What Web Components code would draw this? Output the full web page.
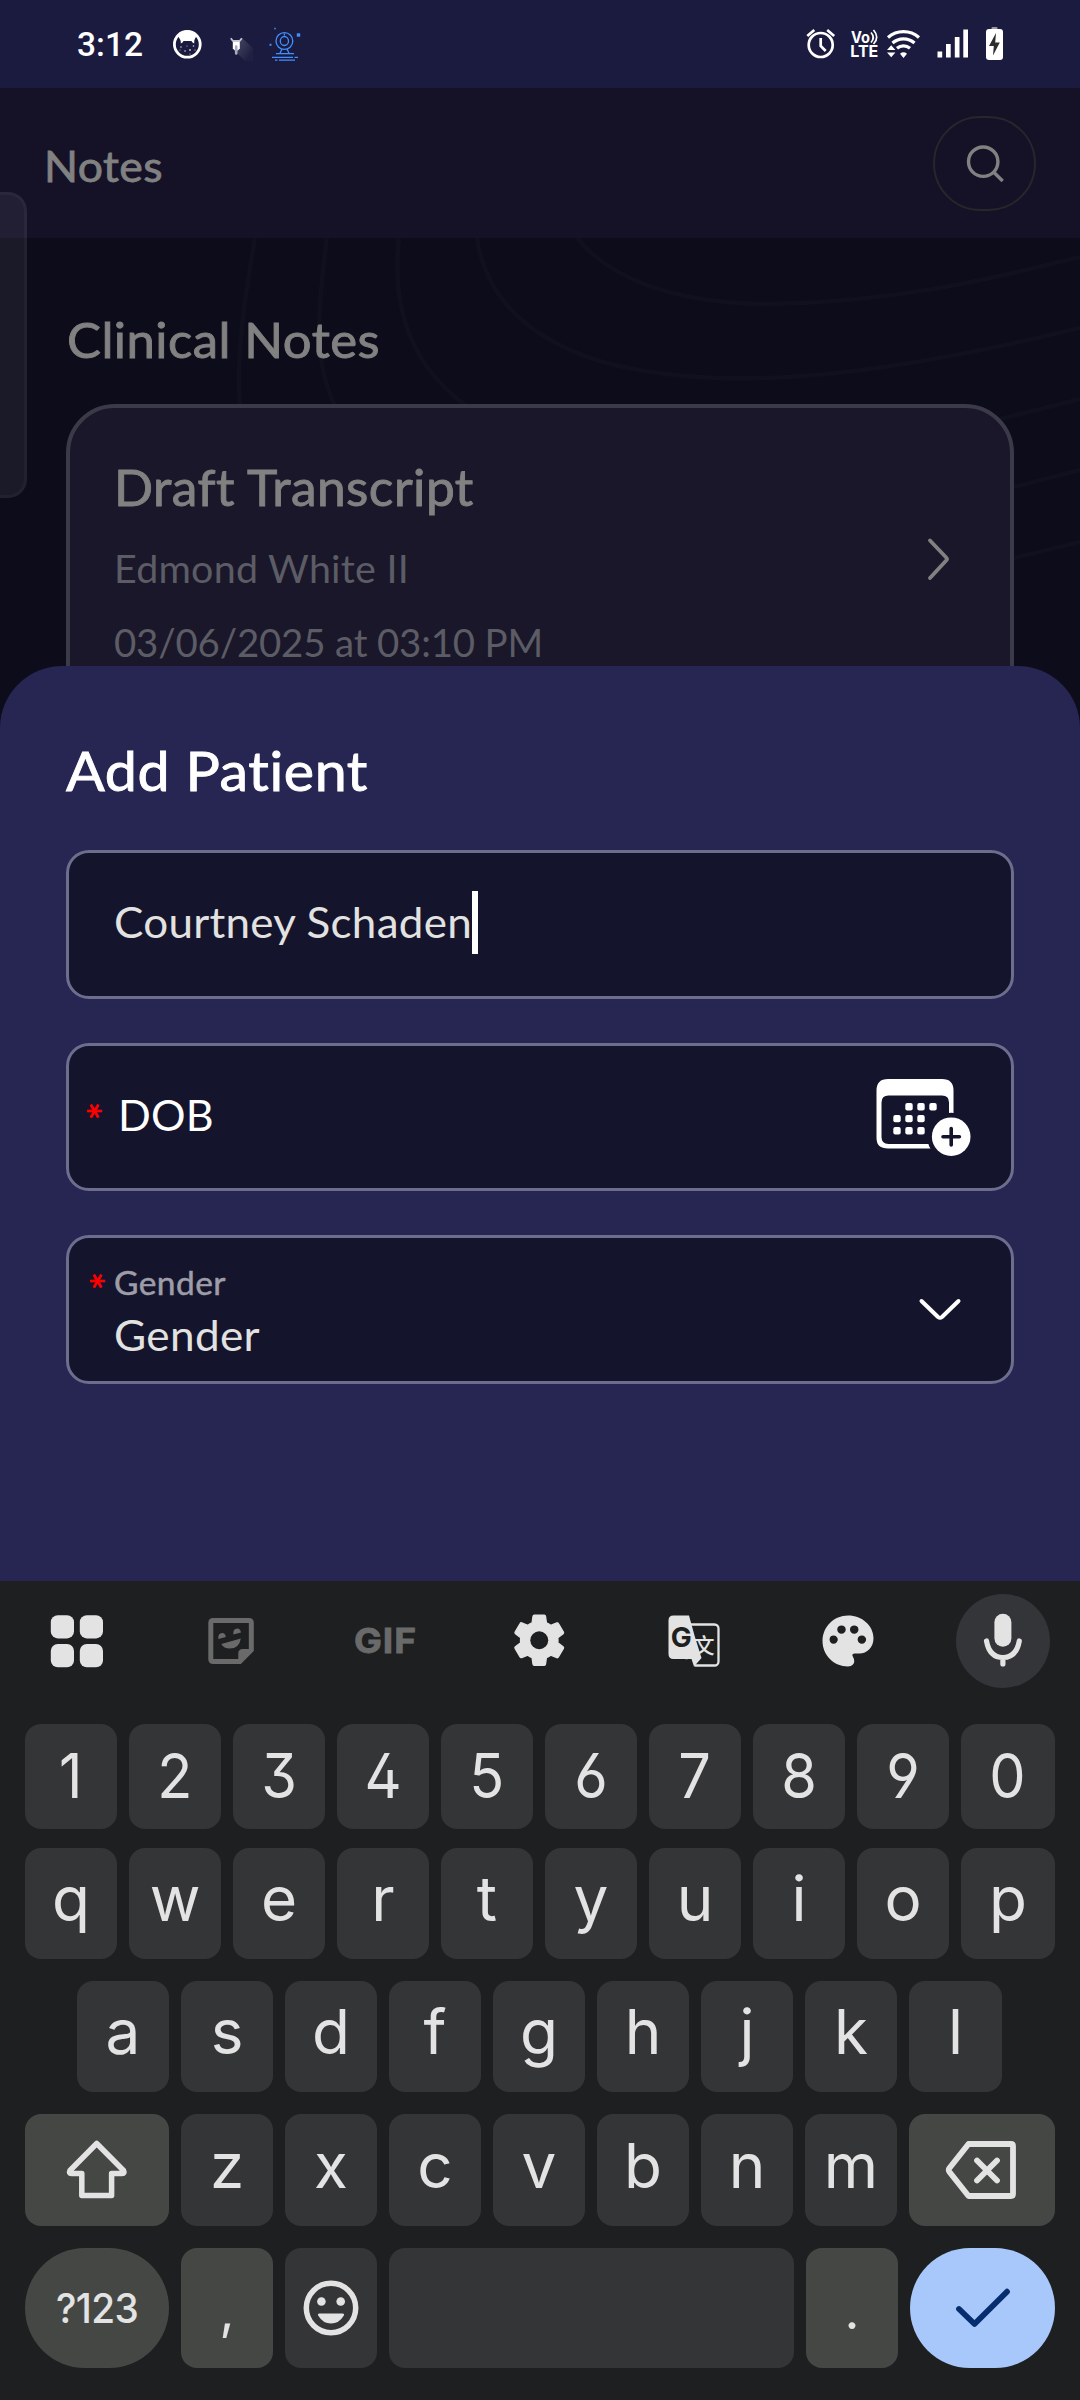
<!DOCTYPE html>
<html lang="en">
<head>
<meta charset="utf-8">
<title>Notes</title>
<style>
html,body{margin:0;background:#0d0c1b}
body{width:1080px;height:2400px;overflow:hidden;font-family:Lato,"Open Sans",sans-serif}
</style>
</head>
<body>
<notes-app></notes-app>
<script>
const define = (name, css, html, after) => customElements.define(name, class extends HTMLElement {
  connectedCallback() {
    if (this.shadowRoot) return;
    const root = this.attachShadow({mode: 'open'});
    root.innerHTML = `<style>:host{display:block;box-sizing:border-box}*{box-sizing:border-box}svg{display:block;flex:none}${css}</style>` +
      (typeof html === 'function' ? html(this) : html);
    if (after) after(this, root);
  }
});

/* Fits a text span to a width: part by widening the glyphs, the rest by spacing. */
const fit = (span, host, w, n) => {
  const natural = span.getBoundingClientRect().width;
  const s = 1 + (w / natural - 1) * 0.65;
  span.style.letterSpacing = ((w / s - natural) / n) + 'px';
  span.style.transform = `translateY(1px) scaleX(${s})`;
  host.style.width = w + 'px';
};

/* Single line of text; "w" is its advance width. */
define('x-label', `:host{display:block;white-space:nowrap;line-height:1.2}span{display:inline-block;transform-origin:0 50%}`,
  `<span><slot></slot></span>`,
  (el, root) => {
    const span = root.querySelector('span');
    el.style.fontSize = el.getAttribute('size') + 'px';
    if (el.hasAttribute('stroke')) span.style.webkitTextStroke = el.getAttribute('stroke') + 'px currentColor';
    const w = parseFloat(el.getAttribute('w'));
    if (w && el.textContent) fit(span, el, w, el.textContent.length);
  });

define('status-bar', `
  :host{display:flex;height:88px;background:#1b1b3f;color:#fff;font-family:Roboto,sans-serif}
  .time{margin:24px 26px 0 77px;flex:none;font-weight:500}`,
  `<x-label class="time" size="33.5" w="66">3:12</x-label>
  <svg width="140" height="88" viewBox="169 0 140 88">
    <circle cx="187.3" cy="44.3" r="12.9" fill="#1b1b3f" stroke="#fff" stroke-width="2.8"/>
    <path d="M180.5 35q1.5-3 7-3.6q5.500.6 7 3.6l-.3 8.500q-2.500-1-3-3h-7.400q-.5 2-3 3z" fill="#fff"/>
    <path d="M178 36q3.500-5.500 9.300-5.500t9.300 5.500l-3 5H181z" fill="#fff"/>
    <g fill="#c9c9d6"><circle cx="181" cy="47" r=".8"/><circle cx="185" cy="51" r=".8"/><circle cx="190" cy="50" r=".9"/><circle cx="193.500" cy="46" r=".8"/><circle cx="187" cy="46" r=".6"/><circle cx="190" cy="54" r=".6"/><circle cx="180" cy="50" r=".5"/><circle cx="195" cy="50" r=".6"/></g>
    <defs><linearGradient id="sh" x1="0" y1="0" x2="1" y2="1"><stop offset="0" stop-color="#fff" stop-opacity=".2"/><stop offset=".8" stop-color="#fff" stop-opacity="0.020"/></linearGradient></defs>
    <path d="M242 38l11 10v13h-8l-9-9z" fill="url(#sh)"/>
    <path d="M230.800 38.300l2 2.500h7l2-2.500" fill="none" stroke="#c4c4d2" stroke-width="1.800"/>
    <path d="M232.800 41.500h7v7l-2 2h-3l-2-2z" fill="#fff"/><path d="M236.200 46.500v7" stroke="#aaaabd" stroke-width="2.600" stroke-linecap="round"/>
    <g fill="none" stroke="#4190ff" stroke-width="1.300"><circle cx="284.400" cy="41" r="8.400"/><ellipse cx="284.400" cy="41" rx="4.100" ry="4.500"/><path d="M284.400 33.500v2M282 49l-2 4.300M287 49l2 4.300M276 53.600h18M272 57.400h21M294.500 57.400h3.500M275 60.200h2.500M279 60.200h16"/></g>
    <g fill="#4190ff"><rect x="296.800" y="33.300" width="3.400" height="3.400"/><rect x="269.500" y="43.800" width="2" height="2"/><rect x="274.300" y="27.800" width="1.500" height="1.500"/></g>
  </svg>
  <svg width="225" height="88" viewBox="800 0 225 88" style="margin-left:auto;margin-right:55px">
    <g fill="none" stroke="#fff" stroke-width="2.700"><circle cx="820.700" cy="45" r="12"/><path d="M820.700 38v8l5 5M807.300 36l7-6M834.200 36l-7-6"/></g>
    <g fill="#fff" font-family="Inter,Roboto,sans-serif" font-weight="700">
      <text x="851" y="42.500" font-size="15.500" textLength="19" lengthAdjust="spacingAndGlyphs">Vo</text>
      <text x="850.300" y="57" font-size="15.800" textLength="28" lengthAdjust="spacingAndGlyphs">LTE</text></g>
    <g fill="none" stroke="#fff" stroke-width="1.700"><path d="M871 32.500q4.500 5 0 10M873.500 30q6.500 7.500 0 14"/></g>
    <g fill="none" stroke="#fff" stroke-width="3.200"><path d="M888 37.500a23.500 23.500 0 0 1 31 0"/><path d="M892.500 43a16.500 16.500 0 0 1 22 0"/><path d="M897 48.300a10 10 0 0 1 13 0"/></g>
    <path d="M903.500 58l-3.500-4.300q3.500-2.800 7 0zM887 50l4.200-4.800 4.200 4.800zM887 52.500l4.200 4.800 4.200-4.800z" fill="#fff"/>
    <path d="M937.500 51.500h4.700v6h-4.700zM946 44h4.700v13.500H946zM954.800 37h4.700v20.500h-4.700zM963.300 29.500h4.700v28h-4.700z" fill="#fff"/>
    <rect x="991.500" y="27" width="6" height="4" rx="1" fill="#9898ab"/><rect x="986" y="29" width="17" height="31" rx="3" fill="#fff"/>
    <path d="M996 33l-7 13h4.800l-.8 9.500 6.800-13h-4.600z" fill="#2c2c2c"/>
  </svg>`);

define('app-header', `
  :host{display:flex;align-items:center;justify-content:space-between;height:150px;background:#151228;color:#818181;padding:3px 44px 0 44px}
  button{display:flex;align-items:center;justify-content:center;width:103px;height:95px;padding:0;margin:-2px 0 0;border:2px solid #26272a;border-radius:48px;background:none}`,
  el => `<x-label size="43" w="119" stroke="0.800">${el.getAttribute('heading')}</x-label>
  <button aria-label="Search"><svg width="42" height="42" viewBox="964 142 42 42" fill="none" stroke="#818181" stroke-width="3.400"><circle cx="983.200" cy="160.700" r="14.700"/><path d="M994 171.500l8.700 8.500"/></svg></button>`);

define('note-card', `
  :host{display:flex;justify-content:space-between;align-items:center;height:311px;border:4px solid #3b3a48;border-radius:49px;background:#1a172b;color:#5c5c65;padding:0 57px 0 44px}
  .txt{display:flex;flex-direction:column;align-self:flex-start;padding-top:49px}
  .t{color:#818181}`,
  `<div class="txt"><x-label class="t" size="49.500" w="358.500" stroke="0.900">Draft Transcript</x-label>
  <x-label size="38.500" w="295" style="margin-top:28px">Edmond White II</x-label>
  <x-label size="39" w="429" style="margin-top:27.300px">03/06/2025 at 03:10 PM</x-label></div>
  <svg width="28" height="46" viewBox="925 536.500 28 46" fill="none" stroke="#818181" stroke-width="3.800" stroke-linecap="round" stroke-linejoin="round"><path d="M930 541l16.200 17q1.500 1.500 0 3l-16.200 17.500"/></svg>`);

define('notes-list', `
  :host{position:relative;height:490px;background:#0d0c1b;color:#818181;padding:71px 66px 0;overflow:hidden}
  .bg{position:absolute;left:0;top:0}
  .body{position:relative}
  note-card{margin-top:36px}`,
  `<svg class="bg" width="1080" height="490" viewBox="0 238 1080 490" fill="none" stroke="#11101f" stroke-width="4.500">
    <path d="M255 238C244 300 234 370 241 410M327 238C316 320 314 365 337 410M399 238C392 300 406 365 472 410M477 238C486 300 530 338 596 360C720 396 880 376 1080 328M577 238C620 290 700 304 770 304C890 302 980 282 1080 257M1000 419L1080 399M1010 488L1080 470M1010 559L1080 542"/></svg>
  <div class="body"><x-label size="49" w="313" stroke="0.900" style="margin-left:.5px">Clinical Notes</x-label><note-card></note-card></div>`);

define('form-field', `
  :host{display:flex;align-items:center;height:149px;border:3px solid #6d6d8d;border-radius:23px;background:#15142d;color:#e2e2e0;padding:0 40px 0 0}
  .lead{align-self:stretch;flex:none;width:45px}
  .main{flex:1;display:flex;align-items:center}`,
  `<div class="lead"><slot name="lead"></slot></div><div class="main"><slot></slot></div><slot name="icon"></slot>`);

define('required-mark', `:host{display:block;color:#f00;font-size:44px;line-height:40px;width:30px;height:40px}span{display:flex;justify-content:center;width:30px;height:40px;transform:rotate(90deg);-webkit-text-stroke:.6px #f00}`, `<span>*</span>`);

define('add-patient-sheet', `
  :host{position:relative;height:915px;margin-top:-62px;border-radius:62px 62px 0 0;background:#272552;color:#fff;padding:70px 66px 0}
  .fields{display:flex;flex-direction:column;gap:44px;margin-top:48px}
  .caret{width:6px;height:63px;background:#fff;margin:-4px 0 0}
  .stack{display:flex;flex-direction:column;align-self:flex-start}`,
  `<x-label size="55" w="303" stroke="0.900">Add Patient</x-label>
  <div class="fields">
    <form-field><x-label size="43" w="358" style="margin-top:-7px">Courtney Schaden</x-label><i class="caret"></i></form-field>
    <form-field style="height:148px;color:#fff"><required-mark slot="lead" style="margin:45px 0 0 1px"></required-mark><x-label size="42.500" w="96" style="margin:-7px 0 0 4px">DOB</x-label>
      <svg slot="icon" width="98" height="82" viewBox="874 1076 98 82" style="margin-right:-1px">
        <path fill="#fff" fill-rule="evenodd" d="M888 1079H942q11.500 0 11.500 11.500V1138q0 10.500-11.500 10.500H888q-11.500 0-11.500-10.500V1090.500q0-11.500 11.500-11.500zM888.500 1095.500q-7 0-7 7V1137q0 7 7 7H942q7 0 7-7V1102.500q0-7-7-7z"/>
        <g fill="#fff">${[[909,1106.7],[921,1106.7],[933,1106.7],[897,1118.6],[909,1118.6],[921,1118.6],[897,1130.8],[909,1130.8],[921,1130.8]].map(([x,y])=>`<rect x="${x-3.7}" y="${y-3.7}" width="7.400" height="7.400" rx="2"/>`).join('')}</g>
        <circle cx="951.200" cy="1136.700" r="24" fill="#15142d"/><circle cx="951.200" cy="1136.700" r="19.300" fill="#fff"/>
        <path d="M943 1136.700h16.400M951.200 1128.500v16.400" stroke="#15142d" stroke-width="3.600" stroke-linecap="round"/>
      </svg></form-field>
    <form-field><required-mark slot="lead" style="margin:23px 0 0 4px"></required-mark>
      <div class="stack" style="margin-top:3px"><x-label size="32" w="112" stroke="0.500" style="color:#9d9da8">Gender</x-label><x-label size="43" w="146" style="margin-top:7px">Gender</x-label></div>
      <svg slot="icon" width="46" height="28" viewBox="916.500 1296 46 28" style="margin-right:8px" fill="none" stroke="#fff" stroke-width="4" stroke-linecap="round" stroke-linejoin="round"><path d="M921 1301l16.500 16q2 1.500 4 0l16.500-16"/></svg></form-field>
  </div>`);

define('key-cap', `
  :host{display:flex;align-items:center;justify-content:center;flex:none;width:92px;border-radius:16px;background:#343537;color:#e3e3e3;font:400 62px/1.2 Inter,Roboto,sans-serif;padding-bottom:var(--lift,8px)}
  :host([alt]){background:#454745}
  :host([pill]){border-radius:60px}
  :host([go]){background:#a8c7fa}
  :host([grow]),:host(:last-child){flex:1}
  :host([mark]){font-size:52px;padding-top:7px}
  :host([digit]) span{transform:scaleX(.93);font-feature-settings:"ss01"}`,
  `<span><slot></slot></span>`);

const keys = (s, a = '') => [...s].map(c => `<key-cap ${a}>${c}</key-cap>`).join('');

define('tool-bar', `
  :host{display:flex;height:143px;padding:12.500px 0 0 29.500px;font-family:Inter,sans-serif}
  .cell{flex:none;width:94px;height:94px;margin-right:60.400px;display:flex;align-items:center;justify-content:center;border-radius:50%}
  .mic{background:#343538;margin-right:0}
  .gif{color:#6a6a6a;font-weight:700}`,
  `<div class="cell"><svg width="54" height="54" viewBox="49.500 1613.500 54 54" fill="#e3e3e3"><rect x="50.300" y="1614.700" width="23.200" height="23.200" rx="7"/><rect x="79.300" y="1614.700" width="23.200" height="23.200" rx="7"/><rect x="50.300" y="1643.500" width="23.200" height="23.200" rx="7"/><rect x="79.300" y="1643.500" width="23.200" height="23.200" rx="7"/></svg></div>
  <div class="cell"><svg width="50" height="50" viewBox="206.700 1615.500 50 50"><path d="M214 1620h35.500q2.500 0 2.500 2.500v27l-11.500 11.500H214q-2.500 0-2.500-2.500v-36q0-2.500 2.500-2.500z" fill="none" stroke="#6a6a6a" stroke-width="5"/><path d="M239 1661v-8q0-4.500 4.500-4.500h10l-12.500 14zM222 1643.500l19.500-5.500q-1.500 10-11 10-6 0-8.500-4.500zM219 1638.500q-.5-6 4-6 3 0 3.500 4zM234 1634q-.5-6 4-6 3 0 3.700 4z" fill="#6a6a6a"/></svg></div>
  <div class="cell gif"><x-label size="34" w="63" stroke="0.800">GIF</x-label></div>
  <div class="cell"><svg width="62.500" height="62.500" viewBox="0 0 24 24" fill="#e3e3e3" stroke="#e3e3e3" stroke-width=".5" stroke-linejoin="round"><path d="M19.140,12.940c0.040-0.300,0.060-0.610,0.060-0.940c0-0.320-0.020-0.640-0.070-0.940l2.030-1.580c0.180-0.140,0.230-0.410,0.120-0.610l-1.920-3.320c-0.120-0.220-0.370-0.290-0.590-0.220l-2.390,0.960c-0.500-0.380-1.030-0.700-1.620-0.940L14.400,2.810c-0.040-0.240-0.240-0.410-0.480-0.410h-3.840c-0.240,0-0.430,0.170-0.470,0.410L9.250,5.350C8.660,5.590,8.120,5.920,7.630,6.290L5.240,5.330c-0.220-0.080-0.470,0-0.590,0.220L2.740,8.870C2.620,9.080,2.660,9.340,2.860,9.480l2.030,1.580C4.840,11.360,4.800,11.690,4.800,12s0.020,0.640,0.070,0.940l-2.030,1.580c-0.180,0.140-0.230,0.410-0.120,0.610l1.920,3.320c0.120,0.220,0.370,0.290,0.590,0.220l2.390-0.960c0.500,0.380,1.030,0.700,1.620,0.940l0.360,2.540c0.050,0.240,0.240,0.410,0.480,0.410h3.840c0.240,0,0.440-0.170,0.470-0.410l0.360-2.540c0.590-0.240,1.130-0.560,1.620-0.940l2.390,0.960c0.220,0.080,0.470,0,0.590-0.220l1.920-3.320c0.120-0.220,0.070-0.470-0.120-0.610L19.140,12.940z"/><circle cx="12" cy="12" r="3.450" fill="#1e1f21" stroke="none"/></svg></div>
  <div class="cell"><svg width="54" height="54" viewBox="666.500 1613.500 54 54">
    <rect x="686" y="1624" width="32" height="41" rx="4" fill="none" stroke="#e3e3e3" stroke-width="2.300"/>
    <path d="M666 1658.700h26l2.500 9h-28.500z" fill="#1e1f21"/>
    <text x="693" y="1652" font-family="Noto Sans CJK SC,sans-serif" font-size="21" font-weight="500" fill="#e3e3e3">文</text>
    <path d="M673 1615h15.500l5.500 20 7 22.500-7.500 8.500-2.500-7.500h-18q-5 0-5-5v-33.500q0-5 5-5z" fill="#e3e3e3"/>
    <text x="670.200" y="1646.300" font-family="Inter,sans-serif" font-size="27.500" font-weight="700" fill="#1e1f21" textLength="21" lengthAdjust="spacingAndGlyphs">G</text></svg></div>
  <div class="cell"><svg width="68" height="68" viewBox="0 0 24 24" fill="#e3e3e3"><path d="M12 3c-4.970 0-9 4.030-9 9s4.030 9 9 9c1.400 0 2.200-.8 2.200-1.900 0-.7-.3-1.200-.5-1.600-.4-.7 0-1.100.7-1.100H16c2.760 0 5-2.240 5-5.400 0-4.420-4.030-8-9-8zm-5.100 10c-.83 0-1.400-.67-1.400-1.500S6.070 10.100 6.900 10.100s1.500.6 1.500 1.400S7.730 13 6.900 13zm2.800-3.600c-.83 0-1.500-.67-1.500-1.500s.67-1.400 1.500-1.400 1.500.57 1.500 1.400-.67 1.500-1.500 1.500zm4.500 0c-.83 0-1.500-.67-1.500-1.500s.67-1.400 1.500-1.400 1.500.57 1.500 1.400-.67 1.500-1.500 1.500zm2.700 3.600c-.83 0-1.500-.67-1.500-1.500s.67-1.400 1.500-1.400 1.500.6 1.500 1.400-.67 1.500-1.500 1.500z"/></svg></div>
  <div class="cell mic"><svg width="42" height="56" viewBox="982 1612.500 42 56"><rect x="994.400" y="1613.300" width="17" height="33" rx="8.500" fill="#e3e3e3"/><path d="M986.500 1640.500q3 16.500 16.400 16.500t16.400-16.500M1002.900 1657v6.500" fill="none" stroke="#e3e3e3" stroke-width="5.200" stroke-linecap="round"/></svg></div>`);

define('soft-keyboard', `
  :host{height:819px;background:#1e1f21}
  .row{display:flex;gap:12px;padding:0 25px;height:111px}
  .w{width:144px}`,
  `<tool-bar></tool-bar>
  <div class="row" style="height:105px;--lift:0px">${keys('1234567890', 'digit')}</div>
  <div class="row" style="margin-top:19px">${keys('qwertyuiop')}</div>
  <div class="row" style="margin-top:22px;padding:0 78px 0 77px">${keys('asdfghjkl')}</div>
  <div class="row" style="margin-top:22px;height:112px">
    <key-cap alt class="w" style="--lift:0px"><svg width="66" height="64" viewBox="64 2138 66 64" fill="none" stroke="#e3e3e3" stroke-width="5.500" stroke-linejoin="round"><path d="M96.700 2143.500L70 2170.500q-1.500 3 1.500 3H81.800V2195.500H111.600V2173.500H122q3 0 1.500-3z"/></svg></key-cap>
    ${keys('zxcvbnm')}
    <key-cap alt style="--lift:0px"><svg width="74" height="62" viewBox="944 2139 74 62" fill="none" stroke="#e3e3e3" stroke-width="5.800" stroke-linejoin="round" stroke-linecap="round"><path d="M967.500 2144h42.500q2 0 2 2v48q0 2-2 2H967.500L948.500 2172q-1.500-2 0-4zM976 2160.500l20 20M996 2160.500l-20 20"/></svg></key-cap>
  </div>
  <div class="row" style="margin-top:22px;height:120px;--lift:0px">
    <key-cap alt pill class="w"><x-label size="41" w="82" style="font-weight:500;margin-left:-1px">?123</x-label></key-cap>
    <key-cap alt mark>,</key-cap>
    <key-cap><svg width="58" height="58" viewBox="302 2278.500 58 58"><circle cx="331" cy="2307.500" r="24.700" fill="none" stroke="#e3e3e3" stroke-width="5.500"/><g fill="#e3e3e3"><circle cx="321.400" cy="2301" r="4.300"/><circle cx="340.700" cy="2301" r="4.300"/><path d="M319.500 2313h23q2.500 0 1 2.500-4.500 7.500-12.500 7.500t-12.500-7.500q-1.500-2.500 1-2.500z"/></g></svg></key-cap>
    <key-cap grow></key-cap>
    <key-cap alt mark>.</key-cap>
    <key-cap go pill style="flex:none;width:145px"><svg width="60" height="42" viewBox="952.500 2286.500 60 42" fill="none" stroke="#062e6f" stroke-width="5.800" stroke-linecap="round" stroke-linejoin="round"><path d="M958.500 2308.500l15.500 15 32.500-32.300"/></svg></key-cap>
  </div>`);

define('notes-app', `
  :host{display:flex;flex-direction:column;width:1080px;height:2400px;position:relative}
  .handle{position:absolute;left:0;top:192px;width:27px;height:306px;border:3px solid rgba(255,255,255,.035);border-left:0;border-radius:0 19px 19px 0;background:rgba(255,255,255,.058)}`,
  `<status-bar></status-bar><app-header heading="Notes"></app-header><notes-list></notes-list>
  <add-patient-sheet></add-patient-sheet><soft-keyboard></soft-keyboard><i class="handle"></i>`);
</script>
</body>
</html>
